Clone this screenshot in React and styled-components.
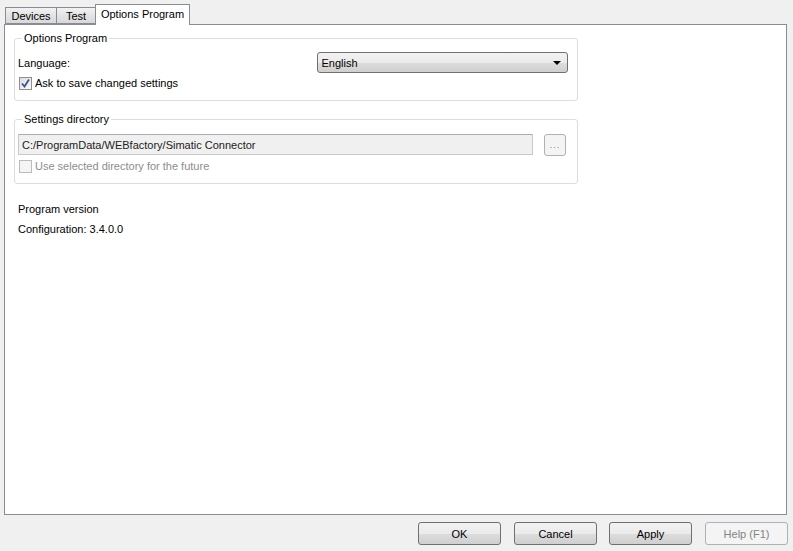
import React from "react";
import styled, { createGlobalStyle } from "styled-components";

const Global = createGlobalStyle`
    html, body {
        margin: 0;
        padding: 0;
        background: #f0f0f0;
    }
    body {
        font-family: "Liberation Sans", Arial, sans-serif;
        font-size: 11px;
        color: #000;
    }
`;

const Window = styled.div`
    width: 793px;
    height: 551px;
    display: flex;
    flex-direction: column;
    background: #f0f0f0;
    overflow: hidden;
`;

const TabBar = styled.div`
    height: 24px;
    padding-left: 5px;
    display: flex;
    align-items: flex-end;
    position: relative;
    z-index: 1;
`;

const Tab = styled.div`
    width: ${(p) => p.$w}px;
    height: ${(p) => (p.$active ? "21px" : "17px")};
    margin-left: ${(p) => (p.$active ? "-1px" : "0")};
    margin-bottom: ${(p) => (p.$active ? "-1px" : "0")};
    box-sizing: border-box;
    display: flex;
    justify-content: center;
    align-items: ${(p) => (p.$active ? "flex-start" : "center")};
    padding-top: ${(p) => (p.$active ? "3px" : "0")};
    border: 1px solid #898c95;
    border-bottom: ${(p) => (p.$active ? "none" : "1px solid #898c95")};
    border-left-width: ${(p) => (p.$first || p.$active ? "1px" : "0")};
    background: ${(p) =>
        p.$active ? "#fff" : "linear-gradient(#f2f2f2, #e3e3e3 50%, #d9d9d9)"};
    font-size: 11px;
    white-space: nowrap;
`;

const Panel = styled.div`
    flex: 1;
    margin: 0 6px 0 4px;
    background: #fff;
    border: 1px solid #898c95;
    padding: 7px 9px 0 9px;
    display: flex;
    flex-direction: column;
    align-items: flex-start;
`;

const Group = styled.fieldset`
    width: 564px;
    box-sizing: border-box;
    margin: 0 0 ${(p) => p.$gap || 0}px 0;
    padding: 7px 9px 7px 3px;
    border: 1px solid #d5dfe5;
    border-radius: 3px;
    min-width: 0;
`;

const Legend = styled.legend`
    padding: 0 2px;
    margin-left: 4px;
    line-height: 13px;
`;

const FormRow = styled.div`
    display: flex;
    align-items: center;
    height: ${(p) => p.$h || 21}px;
`;

const Label = styled.span`
    width: 300px;
    color: ${(p) => (p.$disabled ? "#8d8d8d" : "#000")};
`;

const Combo = styled.div`
    width: 251px;
    height: 21px;
    box-sizing: border-box;
    border: 1px solid #707070;
    border-radius: 3px;
    background: linear-gradient(#f2f2f2, #ebebeb 50%, #dddddd 51%, #cfcfcf);
    display: flex;
    align-items: center;
    justify-content: space-between;
    padding: 0 6px 0 3px;
`;

const Arrow = styled.span`
    width: 0;
    height: 0;
    border-left: 4px solid transparent;
    border-right: 4px solid transparent;
    border-top: 4px solid #000;
`;

const CheckRow = styled.label`
    display: flex;
    align-items: center;
    gap: 3px;
    height: ${(p) => p.$h || 16}px;
    margin-left: 1px;
    color: ${(p) => (p.$disabled ? "#8d8d8d" : "#000")};
`;

const Box = styled.span`
    width: 13px;
    height: 13px;
    box-sizing: border-box;
    border: 1px solid ${(p) => (p.$disabled ? "#bcbcbc" : "#8e8f8f")};
    background: ${(p) =>
        p.$disabled ? "#f4f4f4" : "linear-gradient(135deg, #dcdcdc, #fbfbfb)"};
    display: flex;
    align-items: center;
    justify-content: center;
`;

const PathInput = styled.div`
    width: 515px;
    height: 21px;
    box-sizing: border-box;
    border: 1px solid #c9c9c9;
    border-top-color: #abadb3;
    background: #f0f0f0;
    display: flex;
    align-items: center;
    padding-left: 3px;
    color: #222;
`;

const DotsButton = styled.div`
    width: 22px;
    height: 22px;
    box-sizing: border-box;
    margin-left: 11px;
    border: 1px solid #adb2b5;
    border-radius: 3px;
    background: #f4f4f4;
    color: #838383;
    display: flex;
    align-items: center;
    justify-content: center;
    font-size: 9px;
    letter-spacing: 1px;
`;

const InfoLine = styled.div`
    height: 20px;
    line-height: 20px;
    padding-left: 4px;
    margin-top: ${(p) => p.$top || 0}px;
`;

const Footer = styled.div`
    height: 36px;
    box-sizing: border-box;
    display: flex;
    justify-content: flex-end;
    align-items: flex-start;
    padding: 7px 5px 0 0;
`;

const Button = styled.div`
    width: 83px;
    height: 23px;
    margin-left: ${(p) => p.$gap || 0}px;
    box-sizing: border-box;
    border: 1px solid ${(p) => (p.$disabled ? "#adb2b5" : "#707070")};
    border-radius: 3px;
    background: ${(p) =>
        p.$disabled
            ? "#f4f4f4"
            : "linear-gradient(#f2f2f2, #ebebeb 50%, #dddddd 51%, #cfcfcf)"};
    color: ${(p) => (p.$disabled ? "#838383" : "#000")};
    display: flex;
    align-items: center;
    justify-content: center;
`;

function Check({ checked, disabled }) {
    return (
        <Box $disabled={disabled}>
            {checked && (
                <svg width="9" height="9" viewBox="0 0 9 9">
                    <path d="M1 4.5 L3.5 7.5 L8 0.5" fill="none" stroke="#3b5193" strokeWidth="1.8" />
                </svg>
            )}
        </Box>
    );
}

export default function App() {
    return (
        <Window>
            <Global />
            <TabBar>
                <Tab $first $w={52}>Devices</Tab>
                <Tab $w={39}>Test</Tab>
                <Tab $active $w={95}>Options Program</Tab>
            </TabBar>
            <Panel>
                <Group $gap={12}>
                    <Legend>Options Program</Legend>
                    <FormRow>
                        <Label>Language:</Label>
                        <Combo>
                            <span>English</span>
                            <Arrow />
                        </Combo>
                    </FormRow>
                    <CheckRow $h={20}>
                        <Check checked />
                        Ask to save changed settings
                    </CheckRow>
                </Group>
                <Group>
                    <Legend>Settings directory</Legend>
                    <FormRow $h={23}>
                        <PathInput>C:/ProgramData/WEBfactory/Simatic Connector</PathInput>
                        <DotsButton>...</DotsButton>
                    </FormRow>
                    <CheckRow $h={20} $disabled>
                        <Check disabled />
                        Use selected directory for the future
                    </CheckRow>
                </Group>
                <InfoLine $top={15}>Program version</InfoLine>
                <InfoLine>Configuration: 3.4.0.0</InfoLine>
            </Panel>
            <Footer>
                <Button>OK</Button>
                <Button $gap={13}>Cancel</Button>
                <Button $gap={12}>Apply</Button>
                <Button $gap={13} $disabled>Help (F1)</Button>
            </Footer>
        </Window>
    );
}
